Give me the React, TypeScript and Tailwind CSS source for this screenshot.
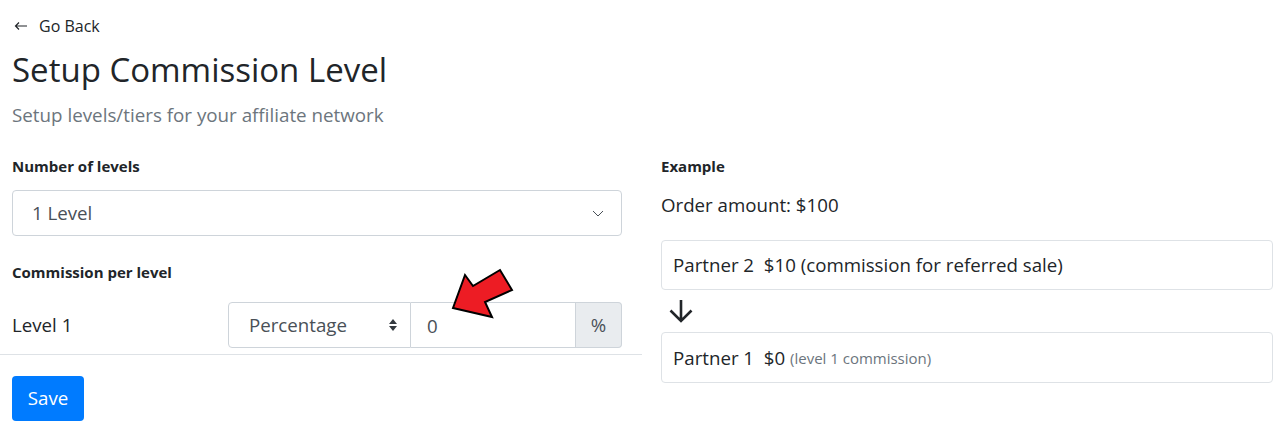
import React from 'react'

const font = { fontFamily: '"Open Sans", "Noto Sans", sans-serif' }

function RedArrow() {
    // pointer overlay drawn over the input
    return (
        <svg className="absolute left-[440px] top-[260px]" width="85" height="65" viewBox="0 0 85 65">
            <polygon
                points="13,48 25,15 33,26 60,10 72,30 45,42 52,57"
                fill="#ed1c24"
                stroke="#000"
                strokeWidth="2"
                strokeLinejoin="miter"
            />
        </svg>
    )
}

export default function App() {
    const [levels, setLevels] = React.useState('1')
    const [kind, setKind] = React.useState('percentage')
    const [value, setValue] = React.useState('0')

    return (
        <div className="relative w-[1283px] h-[432px] bg-white text-[#212529] overflow-hidden" style={font}>
            <div className="px-3 pt-[14px]">
                <a href="#" className="flex items-center h-6 text-base text-[#212529]">
                    <svg width="14" height="10" viewBox="0 0 14 10" className="ml-[2px] mr-[11px]">
                        <path d="M13 5H1.5M5 1.5L1.5 5L5 8.5" fill="none" stroke="#212529" strokeWidth="1.2" />
                    </svg>
                    Go Back
                </a>
                <h1 className="mt-[10px] text-[33px] leading-[43px] font-normal">Setup Commission Level</h1>
                <p className="mt-[9px] text-[18.8px] leading-[30px] text-[#6c757d] font-normal">Setup levels/tiers for your affiliate network</p>
            </div>

            <div className="flex">
                <div className="w-[642px]">
                    <div className="pl-3 pr-5">
                        <label className="block mt-[26px] text-[15px] leading-[21px] font-bold">Number of levels</label>
                        <div className="relative mt-[13px]">
                            <select
                                value={levels}
                                onChange={e => setLevels(e.target.value)}
                                className="appearance-none w-full h-[46px] pl-[19px] pr-10 text-[18.7px] text-[#495057] bg-white border border-[#ced4da] rounded-[4px] outline-none"
                                style={font}
                            >
                                <option value="1">1 Level</option>
                                <option value="2">2 Levels</option>
                                <option value="3">3 Levels</option>
                            </select>
                            <svg className="absolute right-[18px] top-[20px] pointer-events-none" width="12" height="7" viewBox="0 0 12 7">
                                <path d="M1 1l5 5 5-5" fill="none" stroke="#495057" strokeWidth="1" />
                            </svg>
                        </div>
                        <label className="block mt-[26px] text-[15px] leading-[21px] font-bold">Commission per level</label>
                    </div>
                    <div className="flex items-center mt-[19px] pl-3 pr-5 pb-[6px] border-b border-[#dee2e6]">
                        <span className="w-[216px] text-[18.7px]">Level 1</span>
                        <div className="flex flex-1 h-[46px]">
                            <div className="relative w-[183px]">
                                <select
                                    value={kind}
                                    onChange={e => setKind(e.target.value)}
                                    className="appearance-none w-full h-full pl-5 pr-8 text-[18.7px] text-[#495057] bg-white border border-[#ced4da] rounded-l-[4px] outline-none"
                                    style={font}
                                >
                                    <option value="percentage">Percentage</option>
                                    <option value="fixed">Fixed</option>
                                </select>
                                <svg className="absolute right-[14px] top-[17px] pointer-events-none" width="8" height="12" viewBox="0 0 8 12">
                                    <path d="M4 0L8 5H0z M4 12L0 7H8z" fill="#343a40" />
                                </svg>
                            </div>
                            <input
                                value={value}
                                onChange={e => setValue(e.target.value)}
                                className="w-[165px] h-full px-4 text-[18.7px] text-[#495057] border-y border-r border-[#ced4da] outline-none"
                                style={font}
                            />
                            <span className="flex-1 flex items-center justify-center text-[18.7px] text-[#495057] bg-[#e9ecef] border-y border-r border-[#ced4da] rounded-r-[4px]">%</span>
                        </div>
                    </div>
                    <div className="pl-3 mt-[21px]">
                        <button className="w-[72px] h-[45px] text-[18.7px] text-white bg-[#007bff] rounded-[4px]" style={font}>Save</button>
                    </div>
                </div>

                <div className="flex-1 pl-[19px] pr-[10px]">
                    <div className="mt-[26px] text-[15px] leading-[21px] font-bold">Example</div>
                    <div className="mt-[14px] text-[18.7px] leading-[27px]">Order amount: $100</div>
                    <div className="mt-[22px] h-[50px] flex items-center pl-[11px] pr-3 text-[18.7px] border border-[#dee2e6] rounded-[4px]">
                        Partner 2&nbsp; $10 (commission for referred sale)
                    </div>
                    <div className="h-[42px] flex items-center pl-[7px]">
                        <svg width="26" height="24" viewBox="0 0 26 24">
                            <path d="M13 1V22M2.5 11.5L13 22L23.5 11.5" fill="none" stroke="#212529" strokeWidth="2.6" />
                        </svg>
                    </div>
                    <div className="h-[51px] flex items-center pl-[11px] pr-3 pt-[2px] text-[18.7px] border border-[#dee2e6] rounded-[4px]">
                        Partner 1&nbsp; $0&nbsp;<span className="text-[15px] text-[#6c757d]">(level 1 commission)</span>
                    </div>
                </div>
            </div>

            <RedArrow />
        </div>
    )
}
